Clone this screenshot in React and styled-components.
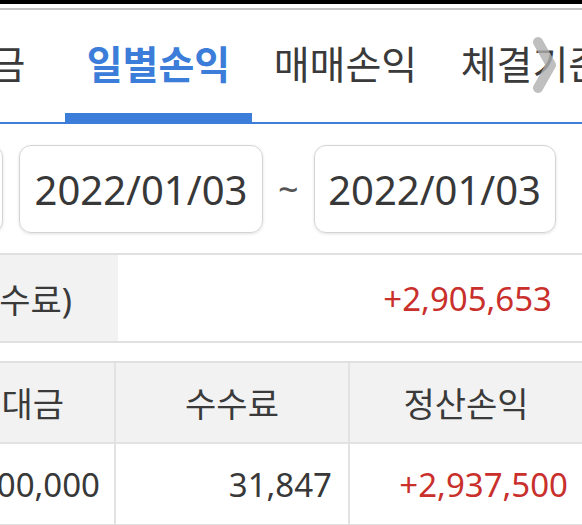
import React from "react";
import styled, { createGlobalStyle } from "styled-components";

const GlobalStyle = createGlobalStyle`
  html, body {
    margin: 0;
    padding: 0;
    background: #ffffff;
  }
  body {
    font-family: "Noto Sans", "Noto Sans CJK KR", sans-serif;
    color: #333333;
  }
`;

const Screen = styled.div`
  width: 582px;
  height: 525px;
  overflow: hidden;
  background: #ffffff;
`;

const StatusBar = styled.div`
  height: 4px;
  background: #000000;
  border-bottom: 4px solid #ffffff;
`;

const TabBar = styled.div`
  position: relative;
  border-top: 2px solid #c4c4c4;
  border-bottom: 2px solid #3b7dd8;
  overflow: hidden;
`;

const TabTrack = styled.div`
  display: flex;
  margin-left: -122px;
`;

const Tab = styled.div`
  flex: 0 0 187px;
  height: 112px;
  display: flex;
  align-items: center;
  justify-content: center;
  position: relative;
  font-size: 39px;
  font-weight: ${(p) => (p.$active ? 700 : 400)};
  color: ${(p) => (p.$active ? "#3b7dd8" : "#3a3a3a")};
  white-space: nowrap;
  padding-bottom: 8px;
  box-sizing: border-box;

  &::after {
    content: "";
    position: absolute;
    left: 0;
    right: 0;
    bottom: 0;
    height: 9px;
    background: ${(p) => (p.$active ? "#3b7dd8" : "transparent")};
  }
`;

const MoreArrow = styled.svg`
  position: absolute;
  left: 529px;
  top: 26px;
`;

const DateRow = styled.div`
  display: flex;
  align-items: center;
  gap: 16px;
  margin: 21px 0 0 -97px;
`;

const DateBox = styled.div`
  flex: 0 0 ${(p) => p.$w}px;
  height: 88px;
  box-sizing: border-box;
  border: 1px solid #d4d4d4;
  border-radius: 12px;
  box-shadow: 0 1px 3px rgba(0, 0, 0, 0.12);
  display: flex;
  align-items: center;
  justify-content: center;
  font-size: 40px;
  color: #383838;
`;

const Tilde = styled.span`
  font-size: 36px;
  color: #555555;
  margin: 0 -1px;
`;

const SummaryRow = styled.div`
  display: flex;
  height: 90px;
  margin-top: 20px;
  border-top: 2px solid #e0e0e0;
  border-bottom: 2px solid #e0e0e0;
  box-sizing: border-box;
`;

const LabelCell = styled.div`
  flex: 0 0 118px;
  background: #f2f2f2;
  display: flex;
  align-items: center;
  justify-content: flex-end;
  padding-right: 46px;
  box-sizing: border-box;
  overflow: hidden;
  white-space: nowrap;
  font-size: 34px;
  color: #3a3a3a;
`;

const ValueCell = styled.div`
  flex: 1;
  display: flex;
  align-items: center;
  justify-content: flex-end;
  padding-right: 30px;
  font-size: 33px;
  color: ${(p) => (p.$red ? "#c9302c" : "#383838")};
`;

const Table = styled.div`
  margin-top: 18px;
  display: grid;
  grid-template-columns: 114px 234px 1fr;
  border-top: 2px solid #e0e0e0;
  border-bottom: 2px solid #e0e0e0;
`;

const HeadCell = styled.div`
  height: 79px;
  background: #f2f2f2;
  display: flex;
  align-items: center;
  justify-content: ${(p) => (p.$clip ? "flex-end" : "center")};
  padding-right: ${(p) => (p.$clip ? "50px" : "0")};
  border-left: ${(p) => (p.$first ? "none" : "2px solid #e2e2e2")};
  border-bottom: 2px solid #e2e2e2;
  overflow: hidden;
  white-space: nowrap;
  font-size: 34px;
  color: #3a3a3a;
`;

const BodyCell = styled.div`
  height: 80px;
  display: flex;
  align-items: center;
  justify-content: flex-end;
  padding-right: ${(p) => p.$pr}px;
  border-left: ${(p) => (p.$first ? "none" : "2px solid #e2e2e2")};
  white-space: nowrap;
  font-size: 33px;
  color: ${(p) => (p.$red ? "#c9302c" : "#383838")};
`;

const tabs = ["입출금", "일별손익", "매매손익", "체결기준"];

export default function App() {
  return (
    <Screen>
      <GlobalStyle />
      <StatusBar />
      <TabBar>
        <TabTrack>
          {tabs.map((t) => (
            <Tab key={t} $active={t === "일별손익"}>
              {t}
            </Tab>
          ))}
        </TabTrack>
        <MoreArrow width="30" height="58" viewBox="0 0 30 58">
          <polyline
            points="9,6 22,29 9,52"
            fill="none"
            stroke="rgba(175,175,175,0.8)"
            strokeWidth="10"
            strokeLinecap="round"
            strokeLinejoin="round"
          />
        </MoreArrow>
      </TabBar>

      <DateRow>
        <DateBox $w={100} />
        <DateBox $w={244}>2022/01/03</DateBox>
        <Tilde>~</Tilde>
        <DateBox $w={242}>2022/01/03</DateBox>
      </DateRow>

      <SummaryRow>
        <LabelCell>수료)</LabelCell>
        <ValueCell $red>+2,905,653</ValueCell>
      </SummaryRow>

      <Table>
        <HeadCell $first $clip>
          대금
        </HeadCell>
        <HeadCell>수수료</HeadCell>
        <HeadCell>정산손익</HeadCell>
        <BodyCell $first $pr={14}>
          00,000
        </BodyCell>
        <BodyCell $pr={16}>31,847</BodyCell>
        <BodyCell $pr={14} $red>
          +2,937,500
        </BodyCell>
      </Table>
    </Screen>
  );
}
